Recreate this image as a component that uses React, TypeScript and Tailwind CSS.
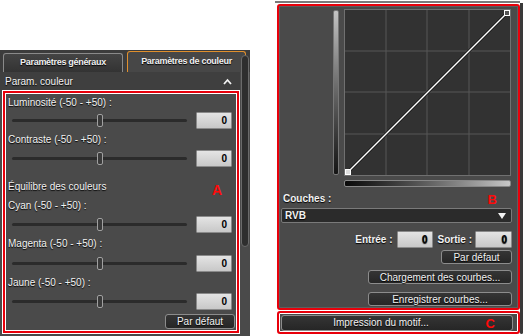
import React from "react";

const font = "font-['Liberation_Sans',Arial,sans-serif]";
const shadow = "[text-shadow:0_1px_1px_#000]";
const redBox =
  "border-2 border-[#e8000b] shadow-[0_0_0_1px_#fff,inset_0_0_0_1px_#fff]";

function Field({ className = "" }: { className?: string }) {
  return (
    <div
      className={`flex h-[17px] w-[36px] items-center justify-end rounded-[1px] border border-[#8a8a8a] bg-gradient-to-b from-[#e4e4e4] to-[#c8c8c8] pr-[4px] text-[10px] font-bold text-black ${className}`}
    >
      0
    </div>
  );
}

function Slider() {
  return (
    <div className="flex h-[18px] items-center pr-[5px]">
      <div className="relative ml-[7px] h-[3px] w-[175px] rounded-full bg-[#2b2b2b]">
        <div className="absolute left-[85px] top-[-5px] h-[13px] w-[6px] rounded-[2px] border border-[#a0a0a0] bg-[#3a3a3a]" />
      </div>
      <Field className="ml-auto" />
    </div>
  );
}

function Label({ text, className = "" }: { text: string; className?: string }) {
  return (
    <div className={`h-[12px] pl-[3px] text-[10px] leading-[12px] text-[#f2f2f2] ${shadow} ${className}`}>
      {text}
    </div>
  );
}

function DarkButton({ text, className = "" }: { text: string; className?: string }) {
  return (
    <div
      className={`flex items-center justify-center rounded-[3px] border border-[#8c8c8c] bg-gradient-to-b from-[#353535] to-[#262626] text-[10px] text-[#f2f2f2] ${shadow} ${className}`}
    >
      {text}
    </div>
  );
}

function LeftPanel() {
  return (
    <div className="flex h-[286px] w-[250px] flex-col bg-[#4a4a4a]">
      {/* tabs */}
      <div className="flex h-[22px] items-end gap-[4px] bg-[#3c3c3c] px-[3px]">
        <div
          className={`flex h-[19px] w-[120px] items-center justify-center rounded-t-[3px] border border-b-0 border-[#8a8a8a] bg-gradient-to-b from-[#444] to-[#333] text-[9px] font-bold tracking-[-0.3px] text-[#f0f0f0] ${shadow}`}
        >
          Paramètres généraux
        </div>
        <div
          className={`flex h-[21px] w-[119px] items-center justify-center rounded-t-[3px] border border-b-0 border-[#e08f2c] bg-[#474747] text-[9px] font-bold tracking-[-0.3px] text-[#f0f0f0] ${shadow}`}
        >
          Paramètres de couleur
        </div>
      </div>
      <div className="flex flex-1">
        <div className="flex w-[240px] flex-col">
          <div className={`flex h-[18px] items-center justify-between bg-[#3f3f3f] pl-[5px] pr-[8px] text-[10px] text-[#f2f2f2] ${shadow}`}>
            <span>Param. couleur</span>
            <svg width="9" height="7" viewBox="0 0 9 7">
              <path d="M1 6 L4.5 2 L8 6" stroke="#f2f2f2" strokeWidth="1.8" fill="none" />
            </svg>
          </div>
          <div className={`ml-[3px] mt-[1px] flex h-[242px] w-[236px] flex-col ${redBox}`}>
            <Label text="Luminosité (-50 - +50) :" className="mt-[4px]" />
            <div className="mt-[2px]"><Slider /></div>
            <Label text="Contraste (-50 - +50) :" className="mt-[5px]" />
            <div className="mt-[3px]"><Slider /></div>
            <div className="relative mt-[14px]">
              <Label text="Équilibre des couleurs" />
              {/* annotation letter */}
              <span className="absolute left-[207px] top-[1px] text-[14px] font-bold leading-[16px] text-[#ff0a0a]">A</span>
            </div>
            <Label text="Cyan (-50 - +50) :" className="mt-[7px]" />
            <div className="mt-[3px]"><Slider /></div>
            <Label text="Magenta (-50 - +50) :" className="mt-[5px]" />
            <div className="mt-[4px]"><Slider /></div>
            <Label text="Jaune (-50 - +50) :" className="mt-[5px]" />
            <div className="mt-[3px]"><Slider /></div>
            <DarkButton text="Par défaut" className="mr-[2px] mt-[4px] h-[15px] w-[70px] self-end" />
          </div>
        </div>
        <div className="ml-[1px] mt-[-17px] h-[192px] w-[8px] rounded-[4px] border border-[#6a6a6a] bg-[#2e2e2e]" />
      </div>
    </div>
  );
}

function Curve() {
  return (
    <div className="relative h-[167px] w-[167px] border border-[#707070] bg-[#323232]">
      <svg className="absolute inset-0" width="165" height="165" viewBox="0 0 165 165">
        {[41, 82, 124].map((v) => (
          <g key={v}>
            <line x1={v} y1="0" x2={v} y2="165" stroke="#575757" strokeWidth="1" />
            <line x1="0" y1={v} x2="165" y2={v} stroke="#575757" strokeWidth="1" />
          </g>
        ))}
        <line x1="3" y1="162" x2="162" y2="3" stroke="#111" strokeWidth="3" />
        <line x1="3" y1="162" x2="162" y2="3" stroke="#fff" strokeWidth="1.4" />
        <rect x="0.5" y="159.5" width="5" height="5" fill="#ddd" stroke="#fff" />
        <rect x="159.5" y="0.5" width="5" height="5" fill="#555" stroke="#fff" />
      </svg>
    </div>
  );
}

function RightPanel() {
  return (
    <div className="flex h-[336px] w-[250px]">
      <div className="flex w-[245px] flex-col">
        <div className="mt-[1px] h-[2px] bg-[#7a7a7a]" />
        <div className={`ml-[2px] mt-[1px] h-[306px] w-[243px] rounded-[3px] ${redBox}`}>
          <div className="flex h-full flex-col border border-[#5e5e5e] bg-[#4a4a4a]">
            <div className="mt-[2px] flex justify-end gap-[5px] pr-[6px]">
              <div className="mt-[1px] h-[165px] w-[6px] rounded-[2px] border border-[#777] bg-gradient-to-b from-[#c4c4c4] to-[#151515]" />
              <Curve />
            </div>
            <div className="mt-[4px] flex justify-end pr-[6px]">
              <div className="h-[7px] w-[167px] rounded-[2px] border border-[#888] bg-gradient-to-r from-[#0a0a0a] to-[#c8c8c8]" />
            </div>
            <div className="mt-[5px] flex h-[12px] items-center justify-between pl-[3px] pr-[20px]">
              <span className={`text-[10px] font-bold text-[#f2f2f2] ${shadow}`}>Couches :</span>
              <span className="mt-[3px] text-[13px] font-bold text-[#ff0a0a]">B</span>
            </div>
            <div
              className={`ml-[1px] mr-[5px] mt-[4px] flex h-[15px] items-center justify-between rounded-[2px] border border-[#7a7a7a] bg-[#2b2b2b] pl-[3px] pr-[5px] text-[10px] font-bold text-[#f2f2f2] ${shadow}`}
            >
              <span>RVB</span>
              <svg width="8" height="6" viewBox="0 0 8 6">
                <path d="M0 0 H8 L4 6 Z" fill="#f2f2f2" />
              </svg>
            </div>
            <div className={`mr-[5px] mt-[9px] flex h-[15px] items-center justify-end text-[10px] font-bold text-[#f2f2f2] ${shadow}`}>
              <span>Entrée :</span>
              <Field className="ml-[4px] h-[15px]" />
              <span className="ml-[5px]">Sortie :</span>
              <Field className="ml-[3px] h-[15px] w-[37px]" />
            </div>
            <DarkButton text="Par défaut" className="mr-[5px] mt-[3px] h-[14px] w-[71px] self-end" />
            <DarkButton text="Chargement des courbes..." className="mr-[5px] mt-[6px] h-[14px] w-[144px] self-end" />
            <DarkButton text="Enregistrer courbes..." className="mr-[5px] mt-[8px] h-[14px] w-[144px] self-end" />
          </div>
        </div>
        <div className={`ml-[2px] mt-[1px] h-[23px] w-[243px] rounded-[3px] ${redBox} flex items-center bg-[#4a4a4a] pl-[2px] pr-[5px]`}>
          <div
            className={`relative flex h-[16px] flex-1 items-center justify-center rounded-[3px] border border-[#8c8c8c] bg-gradient-to-b from-[#353535] to-[#262626] pr-[32px] text-[10px] text-[#f2f2f2] ${shadow}`}
          >
            Impression du motif...
            <span className="absolute right-[17px] top-[1px] text-[13px] font-bold leading-[14px] text-[#ff0a0a] [text-shadow:none]">C</span>
          </div>
        </div>
      </div>
      <div className="mt-[3px] h-[331px] w-[3px] rounded-b-[2px] bg-[#3a3a3a]" />
    </div>
  );
}

export default function App() {
  return (
    <div className={`flex h-[336px] w-[525px] bg-white ${font}`}>
      <div className="pt-[50px]">
        <LeftPanel />
      </div>
      <div className="ml-[25px]">
        <RightPanel />
      </div>
    </div>
  );
}
